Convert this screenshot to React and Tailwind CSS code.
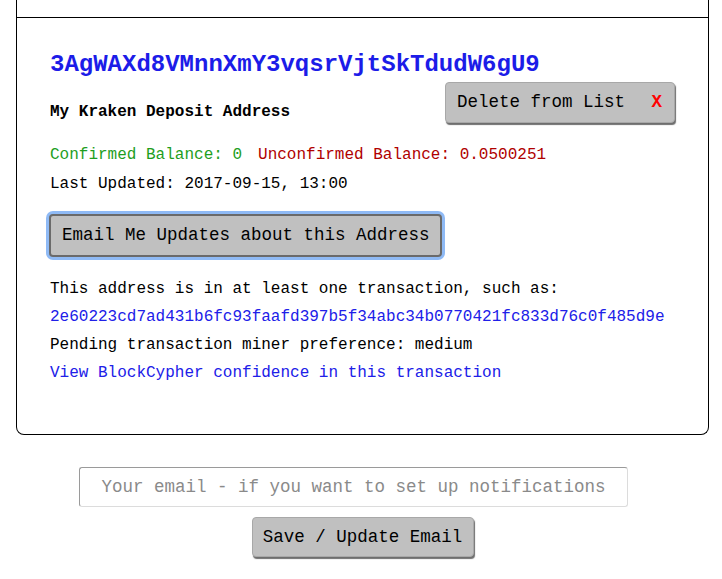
import React, { useState } from 'react';

const mono = { fontFamily: '"Liberation Mono", "Courier New", monospace' };

const App = () => {
    const [email, setEmail] = useState('');

    return (
        <div className="min-h-screen bg-white text-black" style={mono}>
            <div className="ml-4 w-[693px]">
                {/* Previous card (cut off) */}
                <div className="h-[18px] border-x border-b border-black" />

                {/* Address card */}
                <div className="border-x border-b border-black rounded-b-lg px-[33px] pt-[33px] pb-[51px]">
                    <div className="text-[24px] leading-[28px] font-bold text-[#1c1ce8]">
                        3AgWAXd8VMnnXmY3vqsrVjtSkTdudW6gU9
                    </div>

                    <div className="flex justify-between">
                        <div className="mt-[23px] text-[16px] leading-5 font-bold">My Kraken Deposit Address</div>
                        <button className="mt-[3px] h-[41px] w-[230px] flex items-center justify-between pl-[11px] pr-[12px] bg-[#c0c0c0] border border-[#a8a8a8] rounded-[4px] shadow-[1px_2px_1px_#6e6e6e] text-[17.5px]">
                            <span>Delete from List</span>
                            <span className="font-bold text-[#ff0000]">X</span>
                        </button>
                    </div>

                    <div className="mt-[22px] text-[16px] leading-5">
                        <span className="text-[#1e9e1e]">Confirmed Balance: 0</span>
                        <span className="ml-4 text-[#b00000]">Unconfirmed Balance: 0.0500251</span>
                    </div>
                    <div className="mt-[9px] text-[16px] leading-5">Last Updated: 2017-09-15, 13:00</div>

                    <button className="mt-[20px] -ml-[1px] h-[43px] w-[393px] bg-[#c0c0c0] border-2 border-[#6a6a6a] rounded-[4px] ring-[3px] ring-[#8fbaf5] text-[17.5px] text-left pl-[11px]">
                        Email Me Updates about this Address
                    </button>

                    <div className="mt-[22px] flex flex-col gap-2 text-[16px] leading-5">
                        <div>This address is in at least one transaction, such as:</div>
                        <a href="#" className="text-[#2020e8]">2e60223cd7ad431b6fc93faafd397b5f34abc34b0770421fc833d76c0f485d9e</a>
                        <div>Pending transaction miner preference: medium</div>
                        <a href="#" className="text-[#2020e8]">View BlockCypher confidence in this transaction</a>
                    </div>
                </div>

                {/* Email form */}
                <div className="mt-[32px] flex flex-col items-center">
                    <input
                        value={email}
                        onChange={(e) => setEmail(e.target.value)}
                        placeholder="Your email - if you want to set up notifications"
                        className="mr-[18px] h-[40px] w-[549px] text-center text-[17.5px] border border-[#dcdcdc] border-t-[#9a9a9a] border-l-[#9a9a9a] rounded-[3px] placeholder:text-[#8a8a8a] outline-none"
                        style={mono}
                    />
                    <button className="mt-[10px] h-[40px] w-[222px] bg-[#c0c0c0] border border-[#a8a8a8] rounded-[4px] shadow-[1px_2px_1px_#6e6e6e] text-[17.5px]">
                        Save / Update Email
                    </button>
                </div>
            </div>
        </div>
    );
};

export default App;
